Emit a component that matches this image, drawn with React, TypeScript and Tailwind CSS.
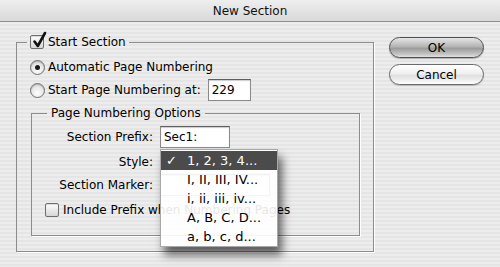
import React from "react";

const font = { fontFamily: '"DejaVu Sans", "Liberation Sans", sans-serif' };

function Checkbox({ checked }: { checked?: boolean }) {
  return (
    <div className="relative w-[14px] h-[14px] shrink-0 rounded-[2px] border border-[#6f6f6f] bg-[linear-gradient(180deg,#ffffff,#d6d6d6)] shadow-[inset_0_1px_1px_rgba(0,0,0,0.15)]">
      {checked && (
        <svg className="absolute left-[1px] top-[-5px]" width="15" height="18" viewBox="0 0 15 18">
          <path d="M2.5 10.5 L5.8 15 L13 2" fill="none" stroke="#111" strokeWidth="2.6" strokeLinecap="round" strokeLinejoin="round" />
        </svg>
      )}
    </div>
  );
}

function Radio({ checked }: { checked?: boolean }) {
  return (
    <div className="relative w-[15px] h-[15px] shrink-0 rounded-full border border-[#6f6f6f] bg-[radial-gradient(circle_at_50%_70%,#ffffff,#d2d2d2)] shadow-[inset_0_1px_1px_rgba(0,0,0,0.2)] flex items-center justify-center">
      {checked && <div className="w-[5px] h-[5px] rounded-full bg-[#1a1a1a]" />}
    </div>
  );
}

function Input({ value, w }: { value: string; w: string }) {
  return (
    <div className={`${w} h-[22px] bg-white border border-[#8a8a8a] border-t-[#5e5e5e] shadow-[inset_0_1px_1px_rgba(0,0,0,0.2)] flex items-center pl-[3px] text-[12px] text-black`}>
      {value}
    </div>
  );
}

export default function App() {
  const items = ["1, 2, 3, 4...", "I, II, III, IV...", "i, ii, iii, iv...", "A, B, C, D...", "a, b, c, d..."];
  return (
    <div
      className="w-[500px] h-[267px] overflow-hidden flex flex-col text-black text-[12px]"
      style={font}
    >
      <div className="h-[22px] shrink-0 border-b border-[#8e8e8e] bg-[linear-gradient(180deg,#eeeeee,#d9d9d9)] flex items-center justify-center text-[12px] text-[#111]">
        New Section
      </div>
      <div className="flex-1 flex items-start pl-[16px] pt-[12px] bg-[repeating-linear-gradient(180deg,#ededed_0px,#ededed_2px,#e5e5e5_2px,#e5e5e5_4px)]">
        <fieldset className="w-[358px] h-[218px] border border-[#8c8c8c] shadow-[1px_1px_0_#ffffff] pl-[13px] flex flex-col">
          <legend className="ml-[-3px] px-[3px] h-[16px]">
            <div className="flex items-center gap-[4px]">
              <Checkbox checked />
              <span className="leading-[16px]">Start Section</span>
            </div>
          </legend>
          <div className="flex items-center gap-[3px] h-[20px] mt-[7px]">
            <Radio checked />
            <span>Automatic Page Numbering</span>
          </div>
          <div className="flex items-center gap-[3px] h-[22px] mt-[2px]">
            <Radio />
            <span>Start Page Numbering at:</span>
            <div className="ml-[4px]">
              <Input value="229" w="w-[43px]" />
            </div>
          </div>
          <fieldset className="ml-[1px] mt-[4px] w-[329px] h-[131px] border border-[#8c8c8c] shadow-[1px_1px_0_#ffffff] flex flex-col">
            <legend className="ml-[15px] px-[4px] h-[16px] leading-[16px]">Page Numbering Options</legend>
            <div className="flex items-center h-[22px] mt-[5px]">
              <span className="w-[121px] text-right">Section Prefix:</span>
              <div className="ml-[7px]">
                <Input value="Sec1:" w="w-[70px]" />
              </div>
            </div>
            <div className="flex items-center h-[20px] mt-[4px]">
              <span className="w-[121px] text-right">Style:</span>
              <div className="ml-[7px] relative w-[118px] h-[20px]">
                <div className="absolute left-0 top-[-3px] w-[118px] h-[98px] z-10 border border-[#a8a8a8] bg-[rgba(255,255,255,0.9)] shadow-[4px_8px_9px_rgba(0,0,0,0.6)] py-[1px] text-[13px]">
                  {items.map((t, i) => (
                    <div
                      key={t}
                      className={
                        i === 0
                          ? "h-[19px] flex items-center bg-[#4b4b4b] text-white"
                          : "h-[19px] flex items-center text-black"
                      }
                    >
                      <span className="w-[26px] pl-[5px]">{i === 0 ? "✓" : ""}</span>
                      <span>{t}</span>
                    </div>
                  ))}
                </div>
              </div>
            </div>
            <div className="flex items-center h-[22px] mt-[2px]">
              <span className="w-[121px] text-right">Section Marker:</span>
              <div className="ml-[7px]">
                <Input value="" w="w-[110px]" />
              </div>
            </div>
            <div className="flex items-center gap-[4px] h-[16px] mt-[6px] ml-[13px]">
              <Checkbox />
              <span>Include Prefix when Numbering Pages</span>
            </div>
          </fieldset>
        </fieldset>
        <div className="ml-[15px] mt-[3px] flex flex-col gap-[6px]">
          <button className="w-[95px] h-[21px] rounded-full border border-[#4f4f4f] bg-[linear-gradient(180deg,#e6e6e6_0%,#b4b4b4_45%,#9c9c9c_55%,#c4c4c4_85%,#e2e2e2_100%)] shadow-[0_1px_1px_rgba(0,0,0,0.25)] text-[12px] text-black flex items-center justify-center">
            OK
          </button>
          <button className="w-[95px] h-[21px] rounded-full border border-[#6a6a6a] bg-[linear-gradient(180deg,#ffffff_0%,#f0f0f0_45%,#e0e0e0_55%,#f2f2f2_85%,#ffffff_100%)] shadow-[0_1px_1px_rgba(0,0,0,0.2)] text-[12px] text-black flex items-center justify-center">
            Cancel
          </button>
        </div>
      </div>
    </div>
  );
}
